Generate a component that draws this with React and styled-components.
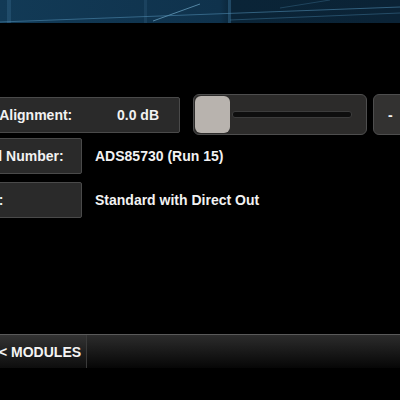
import React from "react";
import styled, { createGlobalStyle } from "styled-components";

const Global = createGlobalStyle`
  html, body {
    margin: 0;
    padding: 0;
    background: #000;
  }
  body {
    font-family: "Liberation Sans", Arial, sans-serif;
  }
`;

const Screen = styled.div`
  width: 400px;
  height: 400px;
  overflow: hidden;
  background: #000;
  display: flex;
  flex-direction: column;
  color: #f2f2f2;
`;

const Banner = styled.div`
  height: 23px;
  flex: none;
  background: #0a2235;
  svg {
    display: block;
  }
`;

const Content = styled.div`
  margin-left: -41px;
  padding-top: 71px;
  display: flex;
  flex-direction: column;
`;

const Row = styled.div`
  display: flex;
  align-items: center;
  height: ${(p) => p.$h}px;
  margin-top: ${(p) => p.$mt || 0}px;
`;

const LabelBox = styled.div`
  box-sizing: border-box;
  width: ${(p) => p.$w}px;
  height: 36px;
  flex: none;
  display: flex;
  align-items: center;
  justify-content: space-between;
  padding: 0 20px 0 ${(p) => p.$pl}px;
  background: #2a2a2a;
  border: 1px solid #4a4a4a;
  border-radius: 2px;
  font-size: 14px;
  font-weight: bold;
  white-space: nowrap;
`;

const Value = styled.div`
  margin-left: 13px;
  font-size: 14px;
  font-weight: bold;
  white-space: nowrap;
`;

const Slider = styled.div`
  box-sizing: border-box;
  margin-left: 13px;
  width: 174px;
  height: 41px;
  flex: none;
  position: relative;
  display: flex;
  align-items: center;
  padding: 0 14px 0 38px;
  background: #2c2b2a;
  border: 1px solid #4e4e4e;
  border-radius: 6px;
`;

const Groove = styled.div`
  flex: 1;
  height: 5px;
  background: #0e0e0e;
  border: 1px solid #3c3c3c;
  border-radius: 3px;
`;

const Thumb = styled.div`
  position: absolute;
  left: 1px;
  top: 1px;
  width: 35px;
  height: 37px;
  background: #b8b3ae;
  border-radius: 6px;
`;

const StepButton = styled.div`
  box-sizing: border-box;
  margin-left: 6px;
  width: 50px;
  height: 41px;
  flex: none;
  display: flex;
  align-items: center;
  padding-left: 14px;
  background: #333231;
  border: 1px solid #4e4e4e;
  border-radius: 6px;
  font-size: 14px;
  font-weight: bold;
`;

const BottomBar = styled.div`
  margin-top: auto;
  margin-bottom: 32px;
  height: 33px;
  flex: none;
  display: flex;
  border-top: 1px solid #5a5a5a;
  background: linear-gradient(#2c2c2c, #060606);
`;

const NavButton = styled.div`
  width: 86px;
  display: flex;
  align-items: center;
  background: linear-gradient(#333, #0d0d0d);
  border-right: 1px solid #3a3a3a;
  font-size: 14px;
  font-weight: bold;
  white-space: nowrap;
  overflow: hidden;
  text-indent: -1px;
  color: #f4f4f4;
`;

function BannerArt() {
  return (
    <svg width="400" height="23" viewBox="0 0 400 23">
      <defs>
        <linearGradient id="bg" x1="0" y1="0" x2="1" y2="0">
          <stop offset="0" stopColor="#123a56" />
          <stop offset="0.55" stopColor="#0f324c" />
          <stop offset="0.58" stopColor="#0a2437" />
          <stop offset="1" stopColor="#0b2336" />
        </linearGradient>
      </defs>
      <rect width="400" height="23" fill="url(#bg)" />
      <rect x="7" width="4" height="23" fill="#2a5878" opacity="0.6" />
      <rect x="144" width="3" height="23" fill="#25506e" opacity="0.5" />
      <rect x="228" width="3" height="23" fill="#2f5f80" opacity="0.6" />
      <line x1="153" y1="21" x2="200" y2="4" stroke="#6fa8c8" strokeWidth="1" opacity="0.7" />
      <line x1="0" y1="22" x2="400" y2="7" stroke="#4d88ad" strokeWidth="1" opacity="0.6" />
      <line x1="230" y1="20" x2="400" y2="13" stroke="#3f7597" strokeWidth="1" opacity="0.5" />
      <line x1="280" y1="8" x2="330" y2="0" stroke="#3f7597" strokeWidth="1" opacity="0.4" />
    </svg>
  );
}

export default function App() {
  return (
    <>
      <Global />
      <Screen>
        <Banner>
          <BannerArt />
        </Banner>
        <Content>
          <Row $h={41}>
            <LabelBox $w={221} $pl={0}>
              <span>Level Alignment:</span>
              <span>0.0 dB</span>
            </LabelBox>
            <Slider>
              <Thumb />
              <Groove />
            </Slider>
            <StepButton>-</StepButton>
          </Row>
          <Row $h={36} $mt={3}>
            <LabelBox $w={123} $pl={4}>
              <span>Serial Number:</span>
            </LabelBox>
            <Value>ADS85730 (Run 15)</Value>
          </Row>
          <Row $h={36} $mt={8}>
            <LabelBox $w={123} $pl={7}>
              <span>Type:</span>
            </LabelBox>
            <Value>Standard with Direct Out</Value>
          </Row>
        </Content>
        <BottomBar>
          <NavButton>&lt; MODULES</NavButton>
        </BottomBar>
      </Screen>
    </>
  );
}
